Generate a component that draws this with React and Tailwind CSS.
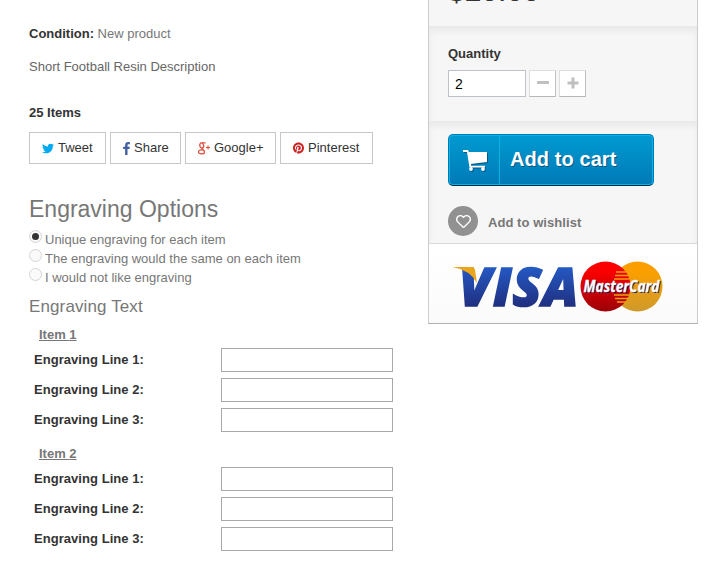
import React, { useState } from 'react'
import { FaTwitter, FaPinterest, FaRegHeart } from 'react-icons/fa'

const engravingOptions = [
  'Unique engraving for each item',
  'The engraving would the same on each item',
  'I would not like engraving'
]

const FacebookIcon = () => (
  <svg className="h-[13px] w-[7px]" viewBox="95 0 864 1664" fill="#435f9f">
    <path d="M959 12v264h-157q-86 0-116 36t-30 108v189h293l-39 296h-254v759h-306v-759h-255v-296h255v-218q0-186 104-288.500t277-102.500q147 0 228 12z" />
  </svg>
)

const GooglePlusIcon = () => (
  <svg className="h-[13px] w-3" viewBox="0.5 0 12 13" fill="none" stroke="#dd4b39">
    <ellipse cx="4.200" cy="3.500" rx="1.900" ry="2.600" strokeWidth="1.300" transform="rotate(-12 4.200 3.500)" />
    <ellipse cx="4" cy="9.900" rx="3" ry="2" strokeWidth="1.200" />
    <path d="M4.500 0.900h3.500M5 5.800c-1.600 1 .8 1.400 1.600 3" strokeWidth="1.100" />
    <path d="M8.500 5.500h4M10.500 3.500v4" strokeWidth="1" />
  </svg>
)

const shareButtons = [
  { label: 'Tweet', width: 'w-[77px]', icon: <FaTwitter className="h-[13px] w-3 text-[#00aaf0]" /> },
  { label: 'Share', width: 'w-[71px]', icon: <FacebookIcon /> },
  { label: 'Google+', width: 'w-[91px]', icon: <GooglePlusIcon /> },
  { label: 'Pinterest', width: 'w-[93px]', icon: <FaPinterest className="h-3 w-[11px] text-[#ce1f21]" /> }
]

const EngravingItem = ({ number }) => (
  <div className="h-[119px]">
    <p className="h-[22px] pl-2.5 font-bold underline">Item {number}</p>
    {[1, 2, 3].map((line) => (
      <div key={line} className="mb-1.5 flex h-6 items-center">
        <label className="w-[192px] pl-[5px] font-bold tracking-[0.05px] text-[#333]">Engraving Line {line}:</label>
        <input className="h-6 w-[172px] border border-[#a9a9a9] bg-white px-1 outline-none" />
      </div>
    ))}
  </div>
)

const CardLogos = () => (
  <svg className="h-[60px] w-[214px]" viewBox="452 255 214 60">
    <defs>
      <linearGradient id="visa" gradientUnits="userSpaceOnUse" x1="0" y1="267" x2="0" y2="306">
        <stop offset="0" stopColor="#2459c4" />
        <stop offset="1" stopColor="#203080" />
      </linearGradient>
      <linearGradient id="red" x1="0" y1="0" x2="0" y2="1">
        <stop offset="0.2" stopColor="#fa0000" />
        <stop offset="1" stopColor="#9c0009" />
      </linearGradient>
      <linearGradient id="gold" x1="0" y1="0" x2="0" y2="1">
        <stop offset="0.2" stopColor="#fb9f00" />
        <stop offset="1" stopColor="#cf9a2c" />
      </linearGradient>
    </defs>
    <text x="459 493 512.500 542.500" y="305.500" fill="url(#visa)" stroke="url(#visa)" strokeWidth="1.600" fontFamily="Open Sans" fontSize="53" fontWeight="800" fontStyle="italic">VISA</text>
    <path d="M452.500 267H471.500Q474.500 267 475 270L477 283Q470 270 452.500 267Z" fill="#eba51b" />
    <circle cx="637.500" cy="286.500" r="25" fill="url(#gold)" />
    <circle cx="605.500" cy="286.500" r="25" fill="url(#red)" />
    <path d="M616 272h10M615 275.500h13M614 279h15M614 295h15M615 298.500h13M617 302h10" stroke="#f0a010" strokeWidth="1.400" />
    <text x="584.500" y="293" textLength="76" lengthAdjust="spacingAndGlyphs" fill="#14144e" fontFamily="Open Sans" fontSize="16" fontWeight="700" fontStyle="italic">MasterCard</text>
    <text x="583.500" y="292" textLength="76" lengthAdjust="spacingAndGlyphs" fill="#fff" stroke="#fff" strokeWidth="0.300" fontFamily="Open Sans" fontSize="16" fontWeight="700" fontStyle="italic">MasterCard</text>
  </svg>
)

const App = () => {
  const [selected, setSelected] = useState(0)
  const [quantity, setQuantity] = useState(2)

  return (
    <div className="flex h-[581px] w-[708px] items-start overflow-hidden bg-white font-['Liberation_Sans',Arial,sans-serif] text-[13px] leading-[18px] text-[#777]">
      <div className="w-[428px] pl-[29px] pt-[25px]">
        <p><span className="font-bold text-[#333]">Condition:</span> New product</p>
        <p className="mt-[15px] text-[#666]">Short Football Resin Description</p>
        <p className="mt-7 font-bold text-[#333]">25 Items</p>

        <div className="mt-2.5 flex gap-1">
          {shareButtons.map(({ label, width, icon }) => (
            <button key={label} className={`${width} flex h-8 items-center border border-[#c7c7c7] pl-3 text-[#333]`}>
              {icon}
              <span className="pl-1">{label}</span>
            </button>
          ))}
        </div>

        <h1 className="mt-8 text-[23px] leading-[26px]">Engraving Options</h1>
        <div className="mt-2">
          {engravingOptions.map((option, i) => (
            <label key={option} className="flex h-[19px] gap-[3px]">
              <input type="radio" name="engraving" className="sr-only" checked={selected === i} onChange={() => setSelected(i)} />
              <span className="flex h-[13px] w-[13px] items-center justify-center rounded-full border border-[#d6d4d4] bg-[#fafafa]">
                {selected === i && <span className="h-[7px] w-[7px] rounded-full bg-[#333]" />}
              </span>
              <span className="pt-px">{option}</span>
            </label>
          ))}
        </div>

        <h2 className="mb-[9px] mt-2.5 text-[17px] leading-5 tracking-[0.120px]">Engraving Text</h2>
        <EngravingItem number={1} />
        <EngravingItem number={2} />
      </div>

      <div className="h-[324px] w-[270px] border-x border-b border-[#ccc] border-b-[#b0b0b0] bg-[#f6f6f6]">
        <div className="flex h-[26px] items-start pl-[19px]">
          <span className="-mt-6 text-[30px] leading-[30px] text-[#333]">$20.00</span>
        </div>
        <div className="h-[95px] pl-[19px] pt-[19px] shadow-[inset_0_5px_6px_rgba(0,0,0,0.055)]">
          <p className="font-bold text-[#333]">Quantity</p>
          <div className="mt-[7px] flex">
            <input className="h-[27px] w-[78px] border border-[#bdc2c9] bg-white px-1.5 text-sm text-black outline-none" value={quantity} readOnly />
            <button className="ml-[3px] flex h-[27px] w-[27px] justify-center border border-[#dedede] border-b-[#b8b7b7] border-r-[#c1c0c0] bg-white pt-2.5" onClick={() => setQuantity(Math.max(1, quantity - 1))}>
              <svg className="h-[3px] w-3" viewBox="0 0 12 3"><rect width="12" height="3" rx="0.6" fill="#c0c0c0" /></svg>
            </button>
            <button className="ml-[3px] flex h-[27px] w-[27px] justify-center border border-[#dedede] border-b-[#b8b7b7] border-r-[#c1c0c0] bg-white pt-1.5" onClick={() => setQuantity(quantity + 1)}>
              <svg className="h-3 w-3" viewBox="0 0 12 12"><path d="M4.500 0.500h3v4h4v3h-4v4h-3v-4h-4v-3h4z" fill="#c0c0c0" /></svg>
            </button>
          </div>
        </div>
        <div className="h-[122px] pl-[19px] pt-[13px] shadow-[inset_0_5px_6px_rgba(0,0,0,0.055)]">
          <button className="flex h-[52px] w-[206px] rounded-[5px] border border-[#0079b6] border-b-[#012740] bg-linear-to-b from-[#009ad0] to-[#007ab7] text-white shadow-[inset_0_0_0_1px_#06b2e6]">
            <span className="flex h-[50px] w-[51px] items-center justify-center border-r border-[#06b2e6] pl-0.5">
              <svg className="h-6 w-6 drop-shadow-[1px_1px_0_#015883]" viewBox="0 0 24 24" fill="#fff">
                <path d="M0 2h5l1 2h18v10l-16 2 .3 1.800H22v1.700H6.500L4 4H0z" />
                <circle cx="8" cy="21" r="1.900" />
                <circle cx="20" cy="21" r="1.900" />
              </svg>
            </span>
            <span className="pl-2.5 pt-3 text-[20px] font-bold leading-6 tracking-[0.080px] [text-shadow:1px_1px_#015883]">Add to cart</span>
          </button>
          <div className="mt-5 flex items-center gap-2.5">
            <span className="flex h-[30px] w-[30px] items-center justify-center rounded-full bg-[#919191]">
              <FaRegHeart className="h-[15px] w-[15px] text-white" />
            </span>
            <span className="pt-1 font-bold tracking-[0.060px]">Add to wishlist</span>
          </div>
        </div>
        <div className="h-20 border-t border-[#d9d9d9] bg-linear-to-b from-white to-[#fbfbfb] pl-[23px] pt-[11px]">
          <CardLogos />
        </div>
      </div>
    </div>
  )
}

export default App
